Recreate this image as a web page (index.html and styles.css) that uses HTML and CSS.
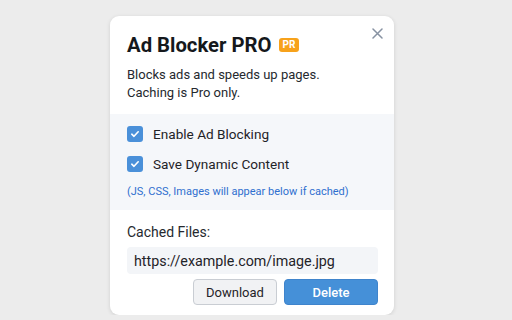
FILE: index.html
```html
<!DOCTYPE html>
<html>
  <head>
    <meta charset="utf-8" />
    <title>Ad Blocker PRO</title>
    <meta name="viewport" content="width=device-width, initial-scale=1" />
    <link rel="stylesheet" href="styles.css">
  </head>
  <body>
    <div class="popup">
      <span class="close">
        <svg width="11" height="11" viewBox="0 0 11 11"><path d="M1 1L10 10M10 1L1 10" stroke="#8792a2" stroke-width="1.5" fill="none" stroke-linecap="round"/></svg>
      </span>
      <div class="header">
        <h1 class="title">Ad Blocker PRO</h1>
        <span class="badge">PR</span>
      </div>
      <p class="desc">Blocks ads and speeds up pages.<br>Caching is Pro only.</p>

      <div class="options">
        <label class="option">
          <span class="check">
            <svg width="10" height="10" viewBox="0 0 10 10"><path d="M1.8 5.2L4 7.3L8.2 2.8" stroke="#fff" stroke-width="1.6" fill="none" stroke-linecap="round" stroke-linejoin="round"/></svg>
          </span>
          Enable Ad Blocking
        </label>
        <label class="option">
          <span class="check">
            <svg width="10" height="10" viewBox="0 0 10 10"><path d="M1.8 5.2L4 7.3L8.2 2.8" stroke="#fff" stroke-width="1.6" fill="none" stroke-linecap="round" stroke-linejoin="round"/></svg>
          </span>
          Save Dynamic Content
        </label>
        <p class="note">(JS, CSS, Images will appear below if cached)</p>
      </div>

      <div class="cache">
        <div class="cache-label">Cached Files:</div>
        <div class="file">https://example.com/image.jpg</div>
        <div class="actions">
          <button class="btn">Download</button>
          <button class="btn btn-primary">Delete</button>
        </div>
      </div>
    </div>
  </body>
</html>
```

FILE: styles.css
```css
body {
  margin: 0;
  background: #ececec;
  font-family: Roboto, "Liberation Sans", sans-serif;
  color: #1f2328;
}
.popup {
  position: relative;
  width: 284px;
  margin: 16px 0 0 110px;
  padding: 16px 0 10px;
  background: #fff;
  border-radius: 9px;
  box-shadow: 0 1px 4px rgba(0, 0, 0, 0.12);
}
.close {
  position: absolute;
  top: 12px;
  right: 11px;
  display: flex;
}
.header {
  display: flex;
  align-items: center;
  gap: 7px;
  padding: 0 17px;
}
.title {
  margin: 0;
  font-size: 20.3px;
  line-height: 26px;
  font-weight: 700;
  color: #15181c;
}
.badge {
  background: #f7a21b;
  color: #fff;
  font-size: 10px;
  font-weight: 700;
  line-height: 14px;
  padding: 0 4px;
  border-radius: 3px;
}
.desc {
  margin: 8px 0 0;
  padding: 0 17px;
  font-size: 13px;
  line-height: 18px;
  color: #25292e;
}
.options {
  margin-top: 12px;
  padding: 10px 17px;
  background: #f5f7fa;
  display: flex;
  flex-direction: column;
  gap: 10px;
}
.option {
  display: flex;
  align-items: center;
  gap: 10px;
  height: 20px;
  font-size: 13.6px;
  color: #1f2328;
}
.check {
  width: 16px;
  height: 16px;
  border-radius: 3px;
  background: #4a90d9;
  display: flex;
  align-items: center;
  justify-content: center;
}
.note {
  margin: 0;
  font-size: 11px;
  line-height: 16px;
  color: #2f6fcf;
}
.cache {
  padding: 13px 16px 0 17px;
}
.cache-label {
  font-size: 14px;
  line-height: 18px;
  color: #25292e;
}
.file {
  margin-top: 6px;
  height: 27px;
  padding: 0 7px;
  display: flex;
  align-items: center;
  background: #f3f5f8;
  border-radius: 4px;
  font-size: 14.3px;
  color: #1f2328;
}
.actions {
  margin-top: 5px;
  display: flex;
  justify-content: flex-end;
  gap: 7px;
}
.btn {
  height: 26px;
  width: 84px;
  border: 1px solid #c9cdd3;
  border-radius: 4px;
  background: #f1f2f4;
  font-family: Roboto, "Liberation Sans", sans-serif;
  font-size: 13px;
  color: #1f2328;
}
.btn-primary {
  width: 94px;
  border-color: #3f84cc;
  background: #4590d8;
  color: #fff;
  font-weight: 500;
}
```
